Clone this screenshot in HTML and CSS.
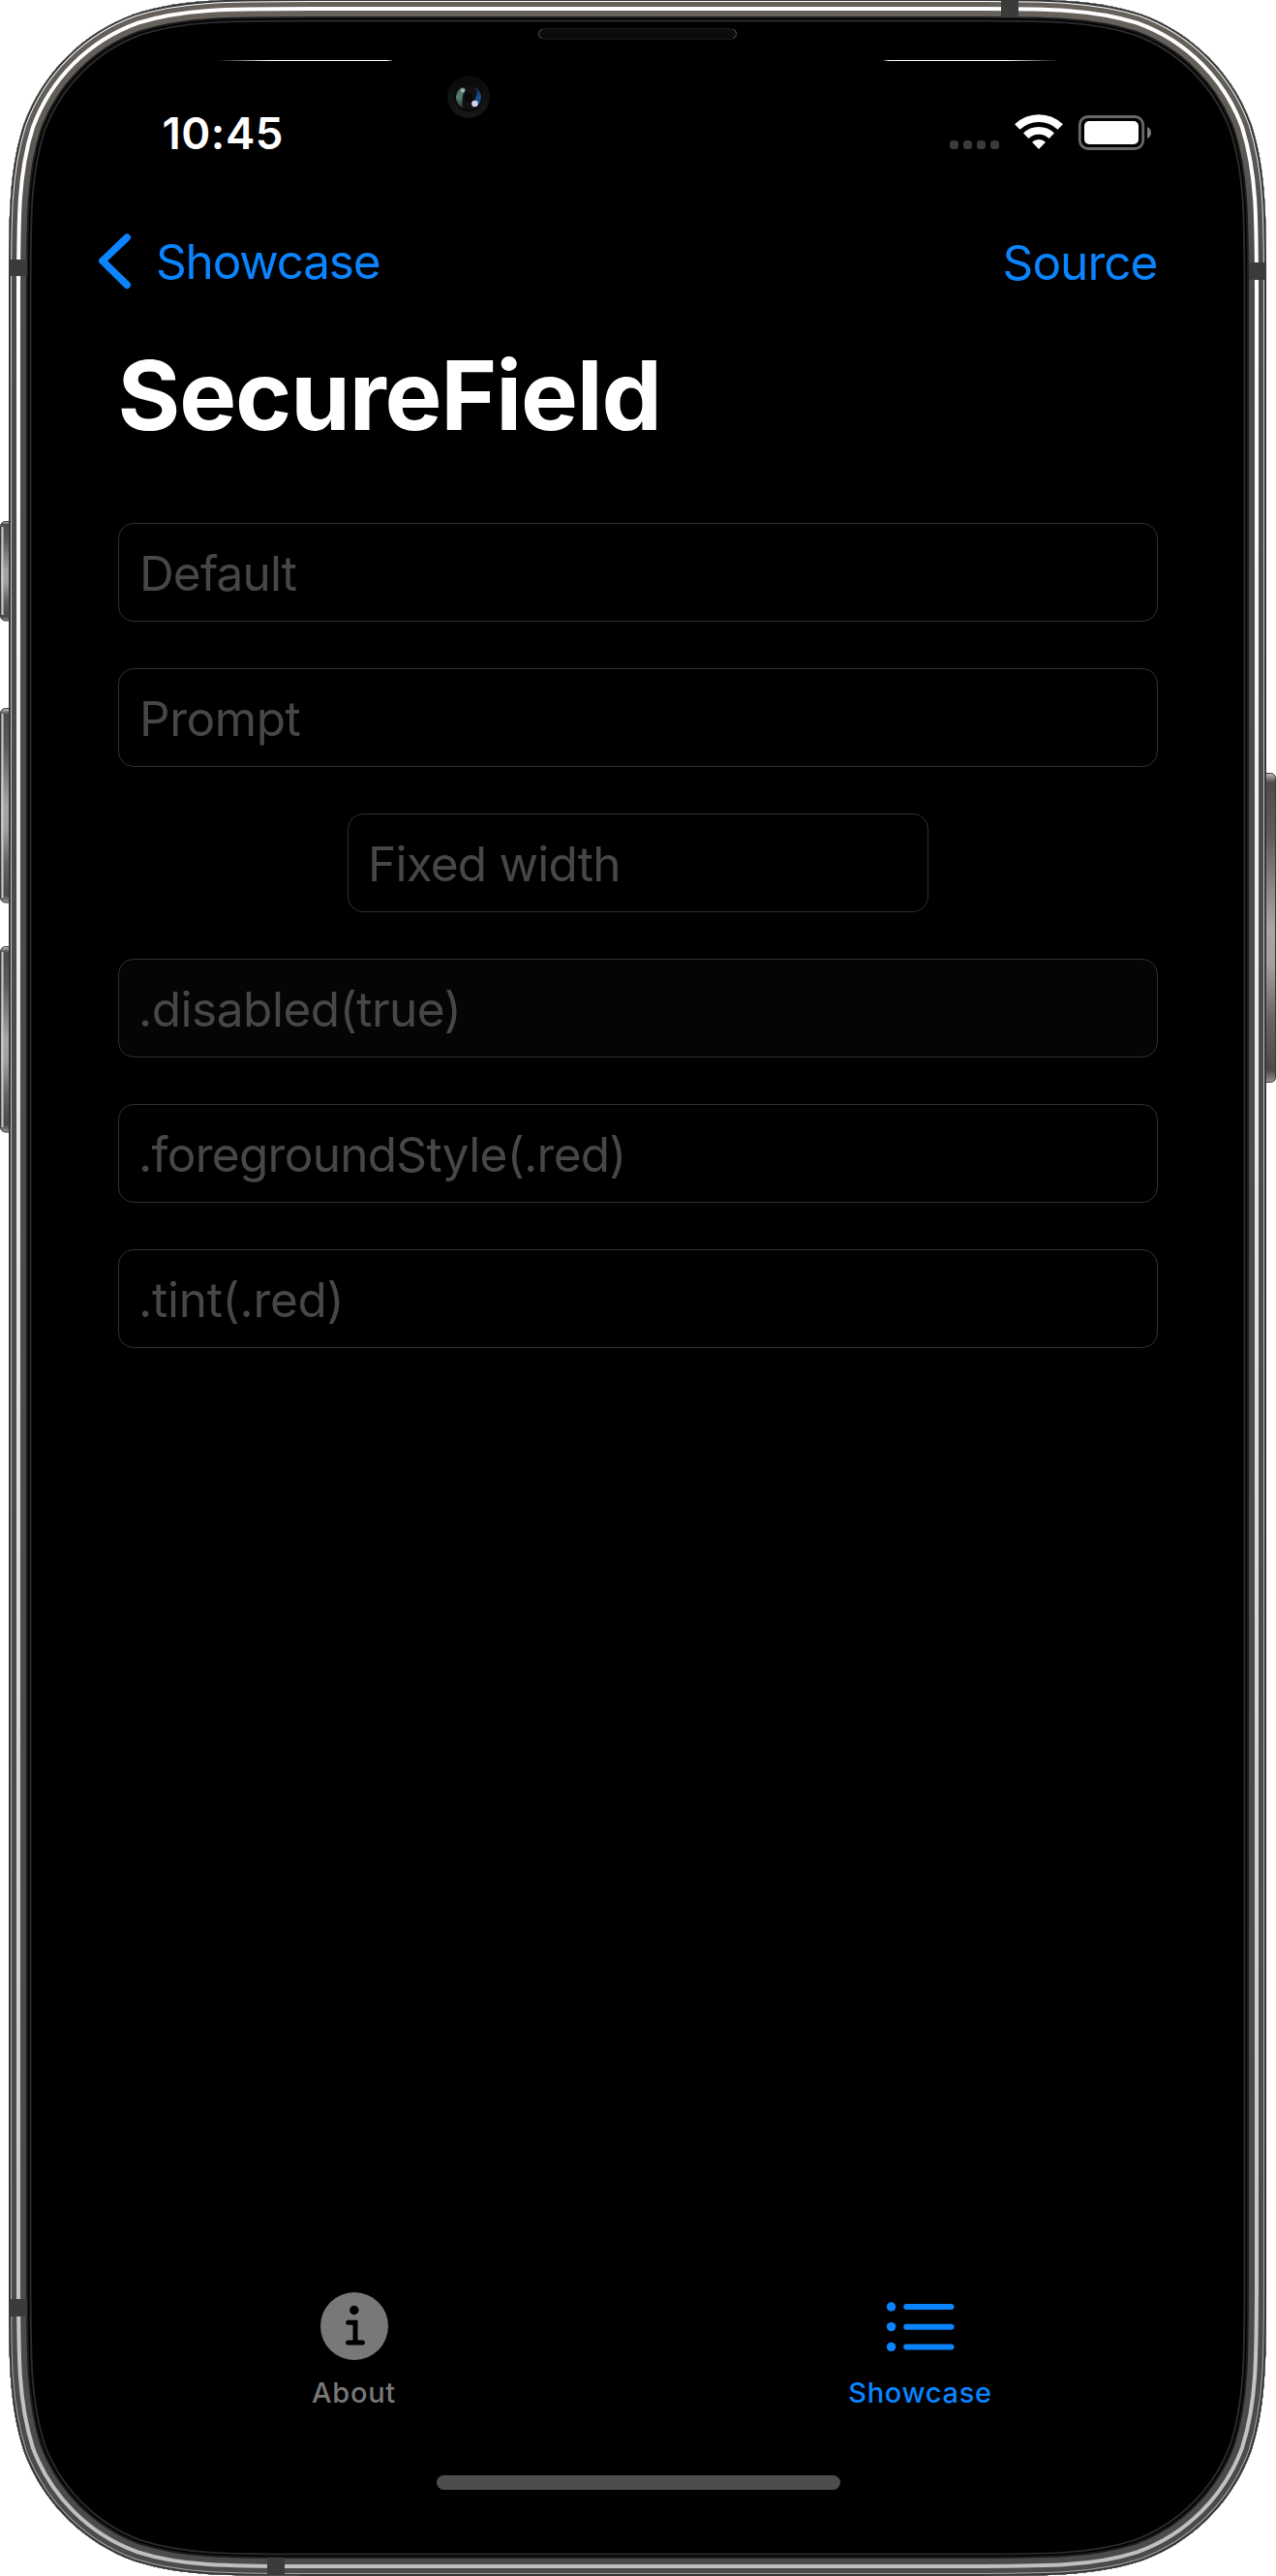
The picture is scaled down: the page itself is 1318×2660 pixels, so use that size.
FILE: index.html
```
<!DOCTYPE html>
<html lang="en">
<head>
<meta charset="utf-8">
<title>SecureField</title>
<link rel="stylesheet" href="styles.css">
</head>
<body>
<div class="phone">
  <svg class="bezel" viewBox="0 0 1318 2660" aria-hidden="true">
    <defs>
      <path id="body" d="M322.4 -1H994.6C1084.9 -1 1130 -1 1178.5 14.4C1231.6 33.7 1273.3 75.4 1292.6 128.5C1308 177 1308 222.1 1308 312.4V2346.6C1308 2436.9 1308 2482 1292.6 2530.5C1273.3 2583.6 1231.6 2625.3 1178.5 2644.6C1130 2660 1084.9 2660 994.6 2660H322.4C232.1 2660 187 2660 138.5 2644.6C85.4 2625.3 43.7 2583.6 24.4 2530.5C9 2482 9 2436.9 9 2346.6V312.4C9 222.1 9 177 24.4 128.5C43.7 75.4 85.4 33.7 138.5 14.4C187 -1 232.1 -1 322.4 -1Z"/>
      <clipPath id="inside"><use href="#body"/></clipPath>
      <linearGradient id="steel" gradientUnits="userSpaceOnUse" x1="0" y1="0" x2="0" y2="2660">
        <stop offset="0" stop-color="#66615b"/><stop offset=".05" stop-color="#5f5b56"/><stop offset=".1" stop-color="#4b4b4b"/><stop offset="1" stop-color="#4b4b4b"/>
      </linearGradient>
      <linearGradient id="shine" gradientUnits="userSpaceOnUse" x1="0" y1="0" x2="0" y2="2660">
        <stop offset="0" stop-color="#fff"/><stop offset=".15" stop-color="#fcfcfc"/><stop offset=".45" stop-color="#e8e6e6"/><stop offset="1" stop-color="#bfbfbf"/>
      </linearGradient>
      <linearGradient id="edge" gradientUnits="userSpaceOnUse" x1="0" y1="0" x2="0" y2="2660">
        <stop offset="0" stop-color="#fff"/><stop offset=".15" stop-color="#c4c4c4"/><stop offset="1" stop-color="#a5a7a6"/>
      </linearGradient>
      <linearGradient id="key" x1="0" y1="0" x2="0" y2="1">
        <stop offset="0" stop-color="#c0c0c0"/><stop offset=".03" stop-color="#4c4c4c"/><stop offset=".2" stop-color="#5c5c5c"/><stop offset=".5" stop-color="#a6a6a6"/><stop offset=".62" stop-color="#a0a0a0"/><stop offset=".8" stop-color="#646464"/><stop offset=".96" stop-color="#4a4a4a"/><stop offset="1" stop-color="#909090"/>
      </linearGradient>
      <linearGradient id="fadeLeft"><stop offset="0" stop-color="#fff" stop-opacity="0"/><stop offset=".3" stop-color="#fff"/><stop offset=".97" stop-color="#fff"/><stop offset="1" stop-color="#fff" stop-opacity=".3"/></linearGradient>
      <linearGradient id="fadeRight"><stop offset="0" stop-color="#fff" stop-opacity=".3"/><stop offset=".03" stop-color="#fff"/><stop offset=".7" stop-color="#fff"/><stop offset="1" stop-color="#fff" stop-opacity="0"/></linearGradient>
      <linearGradient id="cameraRing" x1="0" y1="0" x2="0" y2="1"><stop offset="0" stop-color="#090909"/><stop offset="1" stop-color="#171717"/></linearGradient>
      <linearGradient id="green" x1="0" y1="0" x2="0" y2="1"><stop offset="0" stop-color="#4a6b5c"/><stop offset=".5" stop-color="#587f6c"/><stop offset="1" stop-color="#263c32"/></linearGradient>
      <linearGradient id="blue" x1="0" y1="0" x2="0" y2="1"><stop offset="0" stop-color="#0b2340"/><stop offset=".5" stop-color="#18518f"/><stop offset="1" stop-color="#1d3f6d"/></linearGradient>
      <pattern id="mesh" width="4" height="4" patternUnits="userSpaceOnUse"><rect width="4" height="4" fill="#101010"/><rect width="2" height="2" fill="#070707"/><rect x="2" y="2" width="2" height="2" fill="#070707"/></pattern>
      <clipPath id="lens"><circle cx="484" cy="100.500" r="13"/></clipPath>
    </defs>

    <g class="keys">
      <rect x=".5" y="538.500" width="18" height="102.500" rx="5"/>
      <rect x=".5" y="731.500" width="18" height="200.500" rx="5"/>
      <rect x=".5" y="977.500" width="18" height="191.500" rx="5"/>
      <rect x="1299.500" y="798.500" width="18" height="319" rx="5"/>
      <path d="M2.500 544V635M2.500 737V927M2.500 983V1164"/>
    </g>

    <use href="#body" fill="#000"/>
    <g clip-path="url(#inside)" fill="none">
      <use href="#body" stroke="#2a2a2b" stroke-width="47"/>
      <use href="#body" stroke="#000" stroke-width="43"/>
      <use href="#body" stroke="#1b1b1b" stroke-width="40"/>
      <use href="#body" stroke="url(#steel)" stroke-width="36"/>
      <use href="#body" stroke="url(#shine)" stroke-width="24"/>
      <use href="#body" stroke="url(#steel)" stroke-width="16"/>
      <use href="#body" stroke="url(#edge)" stroke-width="6"/>
      <use href="#body" stroke="#363838" stroke-width="4"/>
    </g>

    <g fill="#3b3b3b">
      <rect x="10" y="268" width="18" height="17"/>
      <rect x="1290" y="271" width="18" height="18"/>
      <rect x="10" y="2374" width="18" height="18"/>
      <rect x="276" y="2641" width="18" height="18"/>
      <rect x="1034" y="1" width="18" height="17"/>
    </g>

    <rect x="224" y="62" width="181" height="1" fill="url(#fadeLeft)"/>
    <rect x="913" y="62" width="181" height="1" fill="url(#fadeRight)"/>
    <rect x="556" y="29.500" width="205" height="11" rx="5.500" fill="url(#mesh)" stroke="#191919"/>
    <path d="M560 30.500Q556.500 32 556.500 35T560 39.500M757 30.500Q760.500 32 760.500 35T757 39.500" fill="none" stroke="#3c3c3c" stroke-width="1.200"/>

    <circle cx="484" cy="100" r="22" fill="url(#cameraRing)"/>
    <circle cx="484" cy="101" r="14" fill="#050505"/>
    <g clip-path="url(#lens)">
      <circle cx="484" cy="100.500" r="13" fill="#121112"/>
      <path d="M477 90Q470 95 471 102Q472 109 478 111Q476 99 481 92Z" fill="url(#green)"/>
      <path d="M490 89Q499 94 497 103Q496 110 488 111L490 104Q495 97 490 89Z" fill="url(#blue)"/>
      <circle cx="484" cy="101" r="4.500" fill="#080808"/>
      <circle cx="478" cy="93.500" r="2.200" fill="#9fb3a9"/>
      <circle cx="490.500" cy="107" r="3.300" fill="#d3d0ea"/>
    </g>
  </svg>

  <main class="screen">
    <header class="status">
      <span class="time">10:45</span>
      <svg class="indicators" viewBox="0 0 208 38" aria-hidden="true">
        <g fill="#3a3a3a"><rect y="27" width="9" height="9" rx="3.500"/><rect x="14" y="27" width="9" height="9" rx="3.500"/><rect x="28" y="27" width="9" height="9" rx="3.500"/><rect x="42" y="27" width="9" height="9" rx="3.500"/></g>
        <g fill="none" stroke="#fff" stroke-width="7.700"><path d="M69.800 13A32 32 0 0 1 114.200 13"/><path d="M78.700 22.200A19.200 19.200 0 0 1 105.300 22.200"/></g>
        <path d="M92 36L85 28.800A10.200 10.200 0 0 1 99 28.800Z" fill="#fff"/>
        <rect x="134.300" y="2.500" width="65.400" height="33" rx="8.500" fill="none" stroke="#686868" stroke-width="2.800"/>
        <rect x="139" y="7" width="56" height="24" rx="5" fill="#fff"/>
        <path d="M204 13Q208 15 208 19T204 25Z" fill="#7c7c7c"/>
      </svg>
    </header>

    <nav class="navbar">
      <a class="back">
        <svg class="chevron" viewBox="0 0 34 60" aria-hidden="true"><path d="M29.200 5.300L3.800 29.400L29.200 54.300"/></svg>
        <span>Showcase</span>
      </a>
      <a class="source">Source</a>
    </nav>

    <h1 class="title">SecureField</h1>

    <section class="fields">
      <div class="field t-default">Default</div>
      <div class="field t-prompt">Prompt</div>
      <div class="field fixed">Fixed width</div>
      <div class="field disabled">.disabled(true)</div>
      <div class="field t-foreground">.foregroundStyle(.red)</div>
      <div class="field t-tint">.tint(.red)</div>
    </section>

    <footer class="tabs">
      <a class="tab">
        <svg class="tab-icon" viewBox="0 0 70 70" aria-hidden="true">
          <circle cx="35" cy="35" r="35" fill="#787878"/>
          <circle cx="34.800" cy="18.500" r="4.700"/>
          <path d="M28.700 31.200H36V52M28.500 52H43.500" fill="none" stroke="#000" stroke-width="5" stroke-linecap="round"/>
        </svg>
        <span>About</span>
      </a>
      <a class="tab active">
        <svg class="tab-icon" viewBox="0 0 70 70" aria-hidden="true">
          <g fill="#0a84ff"><circle cx="4.600" cy="15" r="4.700"/><circle cx="4.600" cy="35.600" r="4.700"/><circle cx="4.600" cy="56.400" r="4.700"/><rect x="17.200" y="12" width="52.300" height="6" rx="3"/><rect x="17.200" y="32.700" width="52.300" height="6" rx="3"/><rect x="17.200" y="53.400" width="52.300" height="6" rx="3"/></g>
        </svg>
        <span>Showcase</span>
      </a>
    </footer>
    <div class="home"></div>
  </main>
</div>
</body>
</html>
```
FILE: styles.css
```
* { box-sizing: border-box; }

body {
  margin: 0;
  background: #fff;
  font-family: Inter, "Liberation Sans", sans-serif;
}

.phone {
  position: relative;
  width: 1318px;
  height: 2660px;
  overflow: hidden;
}

.bezel {
  position: absolute;
  inset: 0;
  width: 1318px;
  height: 2660px;
}

.keys rect { fill: url(#key); stroke: #3a3a3a; }
.keys path { stroke: #cfcaca; stroke-width: 2; }

.screen {
  position: relative;
  display: flex;
  flex-direction: column;
  width: 1170px;
  height: 2660px;
  margin: 0 74px;
  padding: 108px 0 89px;
}

.status {
  display: flex;
  justify-content: space-between;
  height: 60px;
  padding: 0 55px 0 93.500px;
}

.time {
  color: #fff;
  font-size: 45.600px;
  font-weight: 600;
  line-height: 60px;
  letter-spacing: .5px;
}

.indicators {
  width: 208px;
  height: 38px;
  margin-top: 10px;
}

.navbar {
  display: flex;
  justify-content: space-between;
  margin-top: 72px;
  padding: 0 48.500px 0 28px;
  color: #0a84ff;
  font-size: 49.500px;
  line-height: 60px;
}

.back { display: flex; gap: 25px; letter-spacing: -1.200px; }
.chevron { width: 34px; height: 60px; }
.chevron path { fill: none; stroke: #0a84ff; stroke-width: 7.500; stroke-linecap: round; stroke-linejoin: round; }
.source { padding-top: 1px; letter-spacing: -.960px; }

.title {
  margin: 47px 0 0 47.500px;
  color: #fff;
  font-size: 99px;
  font-weight: 700;
  line-height: 120px;
  letter-spacing: -1.130px;
}

.fields {
  display: flex;
  flex-direction: column;
  gap: 48px;
  margin-top: 72px;
  padding: 0 48px;
}

.field {
  height: 102px;
  padding: 2px 20px 0;
  border: 1px solid #303030;
  border-radius: 16px;
  color: #474749;
  font-size: 49.500px;
  line-height: 98px;
  white-space: nowrap;
}

.t-default { padding-left: 21px; letter-spacing: -.850px; }
.t-prompt { padding-left: 21px; letter-spacing: -.460px; }
.fixed { width: 600px; margin-left: 237px; letter-spacing: -.780px; }
.disabled { background: #050505; letter-spacing: -.480px; }
.t-foreground { letter-spacing: -.710px; }
.t-tint { letter-spacing: -.260px; }

.tabs {
  display: grid;
  grid-template-columns: 1fr 1fr;
  margin: auto 1px 0 -1px;
}

.tab {
  display: flex;
  flex-direction: column;
  align-items: center;
  gap: 16px;
  color: #787878;
  font-size: 29px;
  font-weight: 500;
  line-height: 36px;
  letter-spacing: .700px;
}

.active { color: #0a84ff; }
.tab-icon { width: 70px; height: 70px; }

.home {
  width: 417px;
  height: 15px;
  margin: 67px auto 0;
  border-radius: 8px;
  background: #4d4d4d;
}
```
